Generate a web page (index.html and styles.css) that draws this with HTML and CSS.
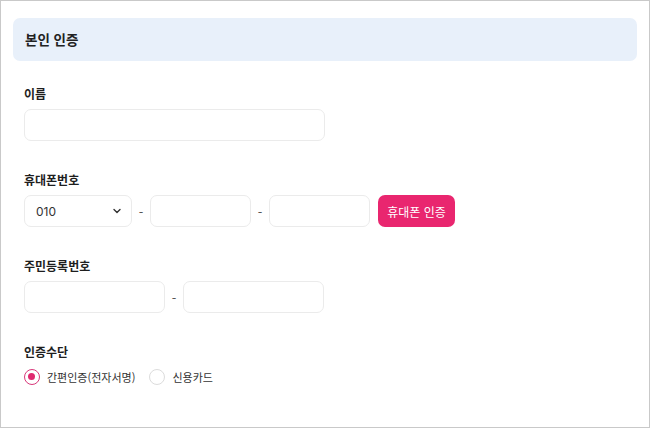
FILE: index.html
```html
<!DOCTYPE html>
<html lang="ko">
<head>
  <meta charset="UTF-8">
  <title>본인 인증</title>
  <link rel="stylesheet" href="styles.css">
</head>
<body>
  <div class="frame">

    <!-- 헤더 -->
    <div class="section-title">본인 인증</div>

    <div class="form">
      <div class="field">
        <label class="field-label">이름</label>
        <input type="text" class="input input-name">
      </div>

      <div class="field">
        <label class="field-label">휴대폰번호</label>
        <div class="row">
          <div class="select">
            <span>010</span>
            <svg width="10" height="10" viewBox="0 0 10 10"><path d="M2 3.5 L5 6.5 L8 3.5" fill="none" stroke="#333" stroke-width="1.4" stroke-linecap="round" stroke-linejoin="round"/></svg>
          </div>
          <span class="dash">-</span>
          <input type="text" class="input input-phone">
          <span class="dash">-</span>
          <input type="text" class="input input-phone">
          <button class="btn-verify">휴대폰 인증</button>
        </div>
      </div>

      <div class="field">
        <label class="field-label">주민등록번호</label>
        <div class="row">
          <input type="text" class="input input-rrn">
          <span class="dash">-</span>
          <input type="text" class="input input-rrn">
        </div>
      </div>

      <div class="field">
        <label class="field-label">인증수단</label>
        <div class="radios">
          <label class="radio checked"><span class="circle"></span>간편인증(전자서명)</label>
          <label class="radio"><span class="circle"></span>신용카드</label>
        </div>
      </div>
    </div>

  </div>
</body>
</html>
```

FILE: styles.css
```css
html, body {
  margin: 0;
  height: 100%;
}

body {
  font-family: "Noto Sans CJK KR", "Noto Sans", sans-serif;
  color: #222;
  background: #fff;
}

.frame {
  box-sizing: border-box;
  width: 650px;
  height: 428px;
  border: 1px solid #c9c9c9;
  padding: 17px 12px 0 12px;
}

.section-title {
  height: 43px;
  line-height: 43px;
  background: #e8f0fa;
  border-radius: 7px;
  padding-left: 12px;
  font-size: 13.5px;
  font-weight: 700;
  color: #222;
}

.form {
  padding: 24px 11px 0 11px;
  display: flex;
  flex-direction: column;
  gap: 30px;
}

.field-label {
  display: block;
  font-size: 12px;
  font-weight: 600;
  line-height: 18px;
  margin-bottom: 6px;
  color: #1e1e1e;
}

.input {
  box-sizing: border-box;
  height: 32px;
  border: 1px solid #ebebeb;
  border-radius: 7px;
  background: #fff;
  margin: 0;
  padding: 0 10px;
  outline: none;
}

.input-name {
  width: 301px;
  display: block;
}

.row {
  display: flex;
  align-items: center;
}

.select {
  box-sizing: border-box;
  width: 108px;
  height: 32px;
  border: 1px solid #ebebeb;
  border-radius: 7px;
  display: flex;
  align-items: center;
  justify-content: space-between;
  padding: 0 9px 0 11px;
  font-family: "Inter", "Noto Sans", sans-serif;
  font-size: 12px;
  color: #333;
}

.dash {
  width: 18px;
  text-align: center;
  font-size: 13px;
  color: #555;
}

.input-phone {
  width: 101px;
}

.input-rrn {
  width: 141px;
}

.btn-verify {
  margin-left: 8px;
  width: 77px;
  height: 32px;
  border: none;
  border-radius: 7px;
  background: #e9266f;
  color: #fff;
  font-family: "Noto Sans CJK KR", sans-serif;
  font-size: 12px;
  padding: 0;
}

.radios {
  display: flex;
  align-items: center;
  gap: 14px;
  height: 20px;
}

.radio {
  display: flex;
  align-items: center;
  gap: 7px;
  font-size: 11px;
  color: #333;
}

.circle {
  box-sizing: border-box;
  width: 16px;
  height: 16px;
  border-radius: 50%;
  border: 1px solid #dcdcdc;
  background: #fff;
  position: relative;
}

.radio.checked .circle {
  border: 1.5px solid #d8387a;
}

.radio.checked .circle::after {
  content: "";
  position: absolute;
  left: 3px;
  top: 3px;
  width: 7px;
  height: 7px;
  border-radius: 50%;
  background: #e0286f;
}
```
